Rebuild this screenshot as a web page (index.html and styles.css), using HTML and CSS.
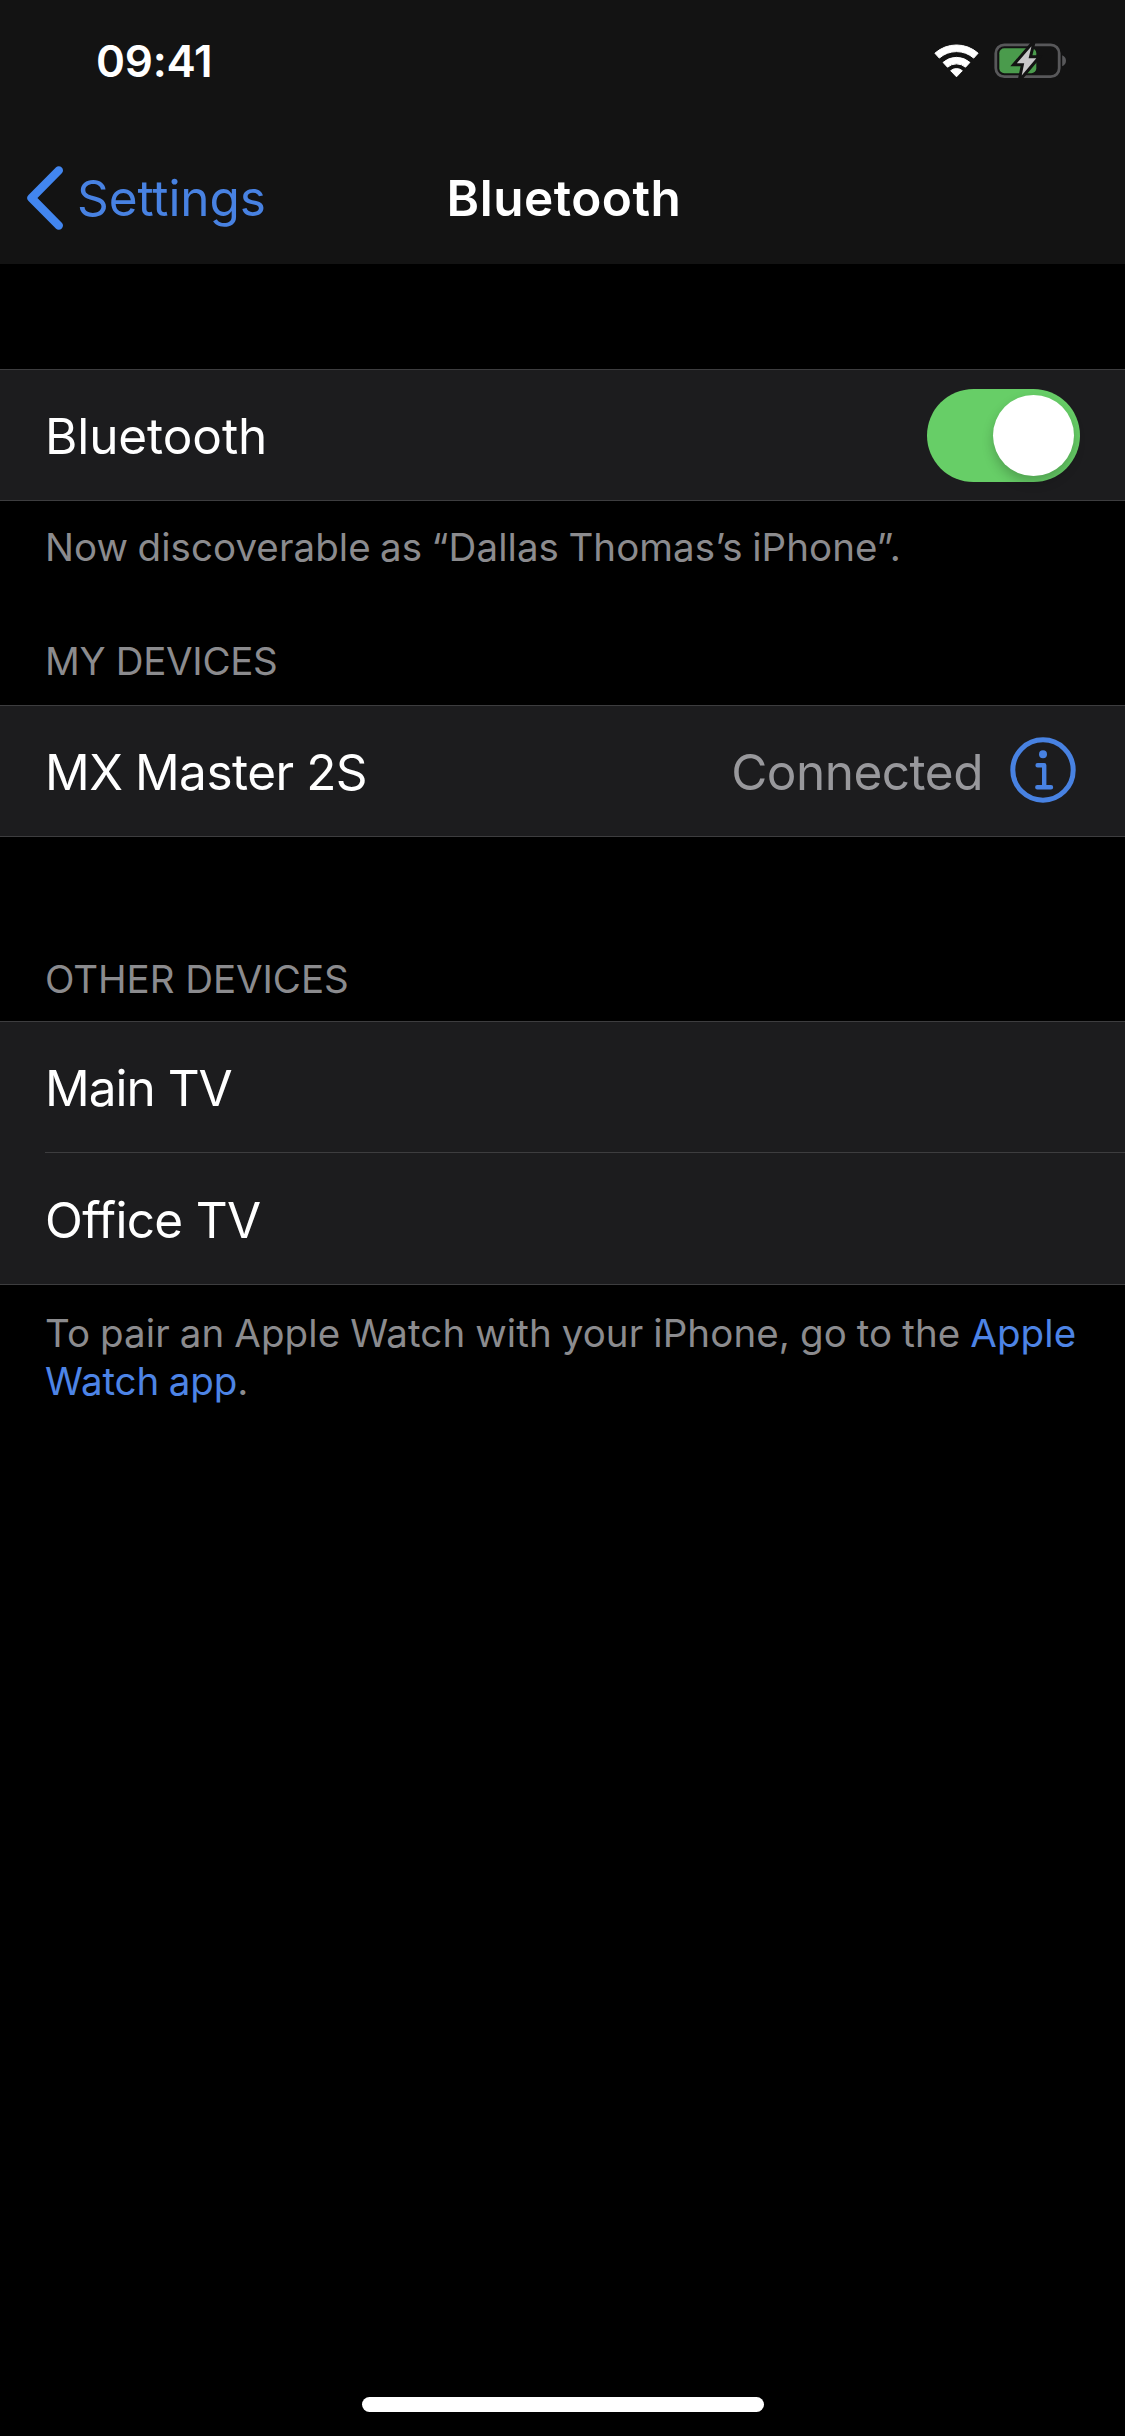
FILE: index.html
```html
<!DOCTYPE html>
<html lang="en">
<head>
<meta charset="utf-8">
<title>Bluetooth</title>
<link rel="stylesheet" href="styles.css">
</head>
<body>
<div class="screen">
  <header class="header">
    <div class="status-bar">
      <span class="status-time">09:41</span>
      <div class="status-icons">
        <svg class="wifi-icon" viewBox="0 0 45 34" width="45" height="34">
          <path d="M.9 9.2A32.5 32.5 0 0 1 44.1 9.2L39.7 14.1A26 26 0 0 0 5.3 14.1Z"/>
          <path d="M9.1 18.4A20.3 20.3 0 0 1 35.9 18.4L31.5 23.2A13.8 13.8 0 0 0 13.5 23.2Z"/>
          <path d="M16.7 26.7A9 9 0 0 1 28.3 26.7L22.5 32.8Z"/>
        </svg>
        <svg class="battery-icon" viewBox="0 0 73 36" width="73" height="36">
          <rect class="battery-case" x="1.8" y="1.8" width="63.4" height="31.9" rx="8.5"/>
          <path class="battery-tip" d="M68.2 12.2Q72 13.8 72 17.7T68.2 23.3Z"/>
          <rect class="battery-level" x="5.3" y="5.3" width="37" height="25" rx="5"/>
          <path class="battery-bolt-gap" d="M37.5 3.2L22.8 20.3H30.2L27.7 32.6L42.3 15.2H34.6Z"/>
          <path class="battery-bolt" d="M37.5 3.2L22.8 20.3H30.2L27.7 32.6L42.3 15.2H34.6Z"/>
        </svg>
      </div>
    </div>
    <nav class="nav-bar">
      <a class="back">
        <svg class="back-icon" viewBox="0 0 38 66" width="38" height="66">
          <path d="M32.8 5.4L5.5 33L32.8 60.6"/>
        </svg>
        <span class="back-label">Settings</span>
      </a>
      <h1 class="nav-title">Bluetooth</h1>
    </nav>
  </header>

  <main class="content">
    <section class="group">
      <div class="row">
        <span class="row-label">Bluetooth</span>
        <span class="switch"><span class="switch-knob"></span></span>
      </div>
    </section>
    <p class="note note-discoverable">Now discoverable as “Dallas Thomas’s iPhone”.</p>

    <h2 class="section-title my-devices">MY DEVICES</h2>
    <section class="group">
      <div class="row row-device">
        <span class="row-label label-mouse">MX Master 2S</span>
        <span class="row-value">Connected</span>
        <svg class="info-icon" viewBox="0 0 66 66" width="66" height="66">
          <circle class="info-ring" cx="33" cy="33" r="30.2"/>
          <circle class="info-dot" cx="33" cy="17.3" r="4"/>
          <path class="info-stem" d="M27.6 28.3H34.2V50M27.3 50.2H41"/>
        </svg>
      </div>
    </section>

    <h2 class="section-title other-devices">OTHER DEVICES</h2>
    <section class="group">
      <div class="row"><span class="row-label label-main">Main TV</span></div>
      <div class="separator"></div>
      <div class="row row-last"><span class="row-label label-office">Office TV</span></div>
    </section>
    <p class="note note-watch">To pair an Apple Watch with your iPhone, go to the <a class="link">Apple <span class="link-rest">Watch app</span></a>.</p>
  </main>

  <div class="home-indicator"></div>
</div>
</body>
</html>
```
FILE: styles.css
```css
* { box-sizing: border-box; }

body {
  margin: 0;
  background: #000;
  color: #fff;
  font-family: Inter, "Liberation Sans", sans-serif;
}

.screen {
  display: flex;
  flex-direction: column;
  width: 1125px;
  height: 2436px;
  padding-bottom: 24px;
  overflow: hidden;
}

.header { height: 264px; background: #131313; }

.status-bar {
  display: flex;
  align-items: center;
  justify-content: space-between;
  height: 122px;
  padding: 0 58px 0 96px;
}

.status-time {
  font-size: 44px;
  font-weight: 600;
  letter-spacing: -0.27px;
}

.status-icons { display: flex; align-items: center; gap: 15px; }

.wifi-icon {
  fill: #fff;
  stroke: #fff;
  stroke-width: 1;
  stroke-linejoin: round;
}

.battery-case { fill: none; stroke: #58585a; stroke-width: 2.8; }
.battery-tip { fill: #58585a; }
.battery-level { fill: #4a9b4c; }

.battery-bolt-gap {
  fill: #131313;
  stroke: #131313;
  stroke-width: 6;
  stroke-miterlimit: 10;
}

.battery-bolt { fill: #c9c7ca; }

.nav-bar {
  display: grid;
  grid-template-columns: 1fr auto 1fr;
  align-items: center;
  height: 142px;
  padding: 10px 0 0 26px;
}

.back { display: flex; align-items: center; gap: 13px; color: #4882e2; }

.back-icon {
  fill: none;
  stroke: #4286f0;
  stroke-width: 8.4;
  stroke-linecap: round;
  stroke-linejoin: round;
}

.back-label {
  padding-bottom: 1px;
  font-size: 49.5px;
  letter-spacing: -0.1px;
}

.nav-title {
  margin: 0 23px 0 0;
  font-size: 49.5px;
  font-weight: 600;
  letter-spacing: 0.5px;
}

.content { flex: 1; padding-top: 105px; }

.group {
  background: #1c1c1e;
  border-top: 1px solid #3d3d3f;
  border-bottom: 1px solid #3d3d3f;
}

.row {
  display: flex;
  align-items: center;
  height: 130px;
  padding: 0 45px;
}

.row-last { height: 131px; }

.row-label {
  flex: 1;
  padding-top: 2px;
  font-size: 49.5px;
  letter-spacing: -0.1px;
}

.label-mouse { letter-spacing: -0.5px; word-spacing: -1px; }
.label-main { letter-spacing: -1px; }
.label-office { letter-spacing: -0.7px; }

.separator { height: 1px; margin-left: 45px; background: #3d3d3f; }

.switch {
  display: flex;
  justify-content: flex-end;
  width: 153px;
  height: 93px;
  padding: 6px;
  border-radius: 47px;
  background: #67ce67;
}

.switch-knob {
  width: 81px;
  height: 81px;
  border-radius: 50%;
  background: #fff;
  box-shadow: 0 6px 12px rgba(0, 0, 0, 0.22);
}

.row-device { padding-right: 49px; }

.row-value {
  padding: 2px 27px 0 0;
  color: #98989c;
  font-size: 49.5px;
  letter-spacing: -0.5px;
}

.info-icon { margin-top: -2px; }
.info-ring { fill: none; stroke: #4882e2; stroke-width: 5; }
.info-dot { fill: #4882e2; }

.info-stem {
  fill: none;
  stroke: #4882e2;
  stroke-width: 4.4;
  stroke-linecap: round;
  stroke-linejoin: round;
}

.note,
.section-title {
  margin: 0;
  padding: 0 45px;
  color: #8b8b8e;
  font-size: 38.5px;
  font-weight: 400;
  line-height: 48px;
}

.note-discoverable {
  padding-top: 22px;
  letter-spacing: 0.07px;
  word-spacing: -1.5px;
}

.my-devices { padding-top: 66px; padding-bottom: 20px; letter-spacing: -0.31px; }
.other-devices { padding-top: 118px; padding-bottom: 18px; letter-spacing: -0.05px; }

.note-watch {
  padding-top: 24px;
  letter-spacing: 0.1px;
  word-spacing: -1px;
}

.link { color: #4d84e6; }
.link-rest { letter-spacing: -0.1px; }

.home-indicator {
  width: 402px;
  height: 15px;
  margin: 0 auto;
  border-radius: 8px;
  background: #fff;
}
```
